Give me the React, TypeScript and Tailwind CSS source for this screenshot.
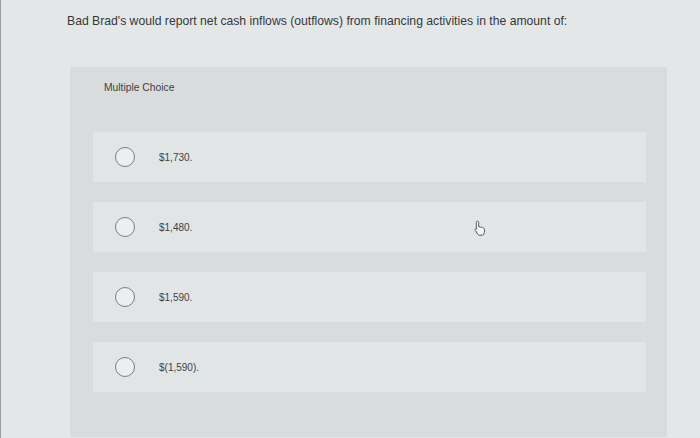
import React from "react";

const OPTIONS = ["$1,730.", "$1,480.", "$1,590.", "$(1,590)."];

function Radio() {
  return <span className="block w-[20px] h-[20px] rounded-full border-[1.5px] border-[#7a7d7e] bg-[#eceeef] shrink-0" />;
}

function HandCursor() {
  return (
    <svg width="14" height="16" viewBox="0 0 14 16" className="absolute left-[472px] top-[220px]">
      <path
        d="M4.5 1.2c.7 0 1.2.5 1.2 1.2v4.3l.3-.1c.6-.2 1.3.2 1.4.8.5-.5 1.4-.4 1.8.2.6-.3 1.3 0 1.6.6l.6 1.5c.3.8.3 1.8 0 2.7l-.6 1.8c-.2.6-.8 1-1.4 1H6.3c-.5 0-1-.3-1.3-.7L2.3 10.4c-.4-.5-.3-1.2.2-1.5.5-.4 1.1-.3 1.5.1l-.7-1V2.4c0-.7.5-1.2 1.2-1.2z"
        fill="#f4f5f5"
        stroke="#555859"
        strokeWidth="1"
        strokeLinejoin="round"
      />
    </svg>
  );
}

export default function App() {
  return (
    <div
      className="relative w-[700px] h-[438px] overflow-hidden bg-[#e4e7e8] border-l border-[#9a9d9e]"
      style={{ fontFamily: "'Liberation Sans', Arial, sans-serif" }}
    >
      <p className="absolute left-[66px] top-[12px] text-[12.2px] text-[#34373a]">
        Bad Brad's would report net cash inflows (outflows) from financing activities in the amount of:
      </p>

      <div className="absolute left-[69px] top-[67px] w-[597px] h-[370px] bg-[#d9dcdd] px-[23px] pt-[13px]">
        <p className="pl-[11px] text-[10.3px] text-[#3c3f41]">Multiple Choice</p>
        <div className="mt-[37px] flex flex-col gap-[20px]">
          {OPTIONS.map((o) => (
            <div key={o} className="h-[50px] w-[553px] bg-[#e2e5e6] flex items-center pl-[22px] gap-[24px]">
              <Radio />
              <span className="text-[10px] text-[#3f4244]">{o}</span>
            </div>
          ))}
        </div>
      </div>

      <HandCursor />
    </div>
  );
}
